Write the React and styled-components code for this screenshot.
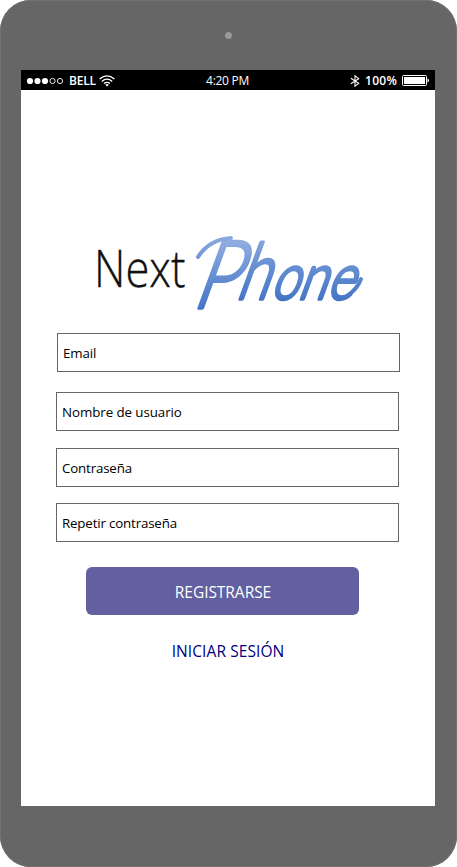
import React from 'react';
import styled, { createGlobalStyle } from 'styled-components';

const GlobalStyle = createGlobalStyle`
  * { box-sizing: border-box; }
  body { margin: 0; background: #fff; font-family: 'Open Sans', 'Noto Sans', sans-serif; }
`;

const Device = styled.div`
  width: 457px;
  height: 867px;
  padding: 0 22px 61px 21px;
  background: #666;
  box-shadow: inset 0 0 0 1px #717171;
  border-radius: 31px;
  display: flex;
  flex-direction: column;
`;

const Bezel = styled.div`
  height: 70px;
  flex: none;
  display: flex;
  justify-content: center;
  padding: 32px 0 0 1px;
`;

const Camera = styled.div`
  width: 7px;
  height: 7px;
  border-radius: 50%;
  background: #999;
`;

const Screen = styled.main`
  flex: 1;
  background: #fff;
  display: flex;
  flex-direction: column;
`;

const StatusBar = styled.header`
  height: 20px;
  background: #000;
  color: #fff;
  display: grid;
  grid-template-columns: 1fr auto 1fr;
  align-items: center;
  padding: 0 6px 0 5px;
  font-size: 12px;
  line-height: 20px;
`;

const StatusGroup = styled.div`
  display: flex;
  align-items: center;
  justify-content: ${(p) => (p.$end ? 'flex-end' : 'flex-start')};
  height: 20px;
`;

const StatusText = styled.span`
  font-size: 12px;
  font-weight: ${(p) => p.$weight || 400};
  letter-spacing: ${(p) => p.$spacing || 0}px;
  margin: 0 ${(p) => p.$right || 0}px 0 ${(p) => p.$left || 0}px;
  padding-top: ${(p) => p.$drop ?? 0}px;
  white-space: nowrap;
`;

const Icon = styled.svg`
  display: block;
  flex: none;
`;

const Content = styled.div`
  display: flex;
  flex-direction: column;
  padding: 136px 36px 0 35px;
`;

const Logo = styled.svg`
  display: block;
  width: 280px;
  height: 94px;
  margin-left: 34px;
  overflow: visible;
`;

const Form = styled.form`
  display: flex;
  flex-direction: column;
  margin-top: 13px;
`;

const Field = styled.div`
  width: 343px;
  height: 39px;
  flex: none;
  margin-left: ${(p) => p.$indent || 0}px;
  margin-bottom: ${(p) => p.$gap}px;
  padding: 1px 5px 0;
  border: 1px solid #666;
  color: #000;
  font-size: 13.33px;
  line-height: 37px;
  letter-spacing: ${(p) => p.$spacing || 0}px;
  white-space: nowrap;
`;

const Submit = styled.button`
  width: 273px;
  height: 48px;
  margin: 0 0 0 30px;
  padding: 2px 0 0 1px;
  border: 0;
  border-radius: 6px;
  background: #6260a0;
  color: #fff;
  font: 400 15.5px 'Open Sans', 'Noto Sans', sans-serif;
  letter-spacing: -0.05px;
`;

const LoginLink = styled.a`
  align-self: center;
  margin-top: 25px;
  padding-left: 1px;
  color: #000080;
  font-size: 15.5px;
  line-height: 22px;
  letter-spacing: 0.08px;
  white-space: nowrap;
`;

const fields = [
  { label: 'Email', indent: 1, gap: 20, spacing: -0.1 },
  { label: 'Nombre de usuario', gap: 17, spacing: -0.07 },
  { label: 'Contraseña', gap: 16, spacing: -0.17 },
  { label: 'Repetir contraseña', gap: 25, spacing: -0.17 },
];

const scriptLetters = [
  { char: 'P', x: 191, y: 308, size: 94, stretch: 0.8 },
  { char: 'h', x: 235, y: 299, size: 78, stretch: 0.76 },
  { char: 'o', x: 270, y: 299, size: 63, stretch: 0.78 },
  { char: 'n', x: 297, y: 299, size: 63, stretch: 0.82 },
  { char: 'e', x: 326, y: 299, size: 63, stretch: 0.8 },
];

function Signal() {
  return (
    <Icon width="38" height="8" viewBox="0 0 38 8">
      {[4, 11.5, 19].map((x) => (
        <circle key={x} cx={x} cy="4" r="3.1" fill="#fff" />
      ))}
      {[26.5, 34].map((x) => (
        <circle key={x} cx={x} cy="4" r="2.6" fill="none" stroke="#fff" strokeWidth=".9" />
      ))}
    </Icon>
  );
}

function Wifi() {
  return (
    <Icon width="16" height="12" viewBox="0 0 16 12" fill="none" stroke="#fff" strokeWidth="1.35">
      <path d="M.6 4.1Q8-2.4 15.4 4.1M2.8 6.4Q8 1.9 13.2 6.4M5 8.6Q8 6.1 11 8.6" />
      <path d="M6.2 9.7Q8 8.4 9.8 9.7L8 11.5Z" fill="#fff" stroke="none" />
    </Icon>
  );
}

function Bluetooth() {
  return (
    <Icon width="10" height="12" viewBox="0 0 10 12" fill="none" stroke="#fff" strokeWidth="1.1">
      <path d="M.8 3.2 8.7 8.4 5 11.2V.8L8.7 3.6.8 8.8" />
    </Icon>
  );
}

function Battery() {
  return (
    <Icon width="27" height="12" viewBox="0 0 27 12">
      <rect x=".5" y=".5" width="24" height="10" rx="1" fill="none" stroke="#fff" />
      <rect x="2" y="2" width="21" height="7" fill="#fff" />
      <path d="M25.5 3.5Q27 4 27 5.5T25.5 7.5Z" fill="#fff" />
    </Icon>
  );
}

function Wordmark() {
  return (
    <Logo viewBox="90 226 280 94" role="img" aria-label="Next Phone">
      <defs>
        <linearGradient id="ink" gradientUnits="userSpaceOnUse" x1="0" y1="-66" x2="0" y2="10">
          <stop offset="0" stopColor="#8eace0" />
          <stop offset=".45" stopColor="#668fd2" />
          <stop offset=".85" stopColor="#4877c8" />
          <stop offset="1" stopColor="#3b64b7" />
        </linearGradient>
      </defs>
      <text x="94" y="287.3" fontFamily="'Open Sans', 'Noto Sans', sans-serif" fontWeight="300" fontSize="51.5" textLength="91.5" lengthAdjust="spacingAndGlyphs" fill="#111" stroke="#111" strokeWidth=".35">Next</text>
      <g fontFamily="Lato, sans-serif" fontWeight="300" fill="url(#ink)" stroke="url(#ink)" strokeWidth="3.6" strokeLinejoin="round" strokeLinecap="round">
        {scriptLetters.map((l) => (
          <text key={l.char} fontSize={l.size} transform={`translate(${l.x} ${l.y}) skewX(-20) scale(${l.stretch} 1)`}>{l.char}</text>
        ))}
        <g transform="translate(0 300)" fill="none" strokeWidth="4">
          <path d="M198-43C205-54 216-61 231-62" />
          <path d="M361-21C358-13 353-8 347-4" />
        </g>
      </g>
    </Logo>
  );
}

export default function App() {
  return (
    <>
      <GlobalStyle />
      <Device>
        <Bezel><Camera /></Bezel>
        <Screen>
          <StatusBar>
            <StatusGroup>
              <Signal />
              <StatusText $left={5} $right={3} $weight={600} $spacing={-0.2}>BELL</StatusText>
              <Wifi />
            </StatusGroup>
            <StatusText $spacing={-0.3} $drop={1}>4:20 PM</StatusText>
            <StatusGroup $end>
              <Bluetooth />
              <StatusText $left={5} $right={5} $weight={600} $spacing={0.25} $drop={1}>100%</StatusText>
              <Battery />
            </StatusGroup>
          </StatusBar>
          <Content>
            <Wordmark />
            <Form>
              {fields.map((f) => (
                <Field key={f.label} $indent={f.indent} $gap={f.gap} $spacing={f.spacing}>{f.label}</Field>
              ))}
              <Submit type="button">REGISTRARSE</Submit>
            </Form>
            <LoginLink>INICIAR SESIÓN</LoginLink>
          </Content>
        </Screen>
      </Device>
    </>
  );
}
